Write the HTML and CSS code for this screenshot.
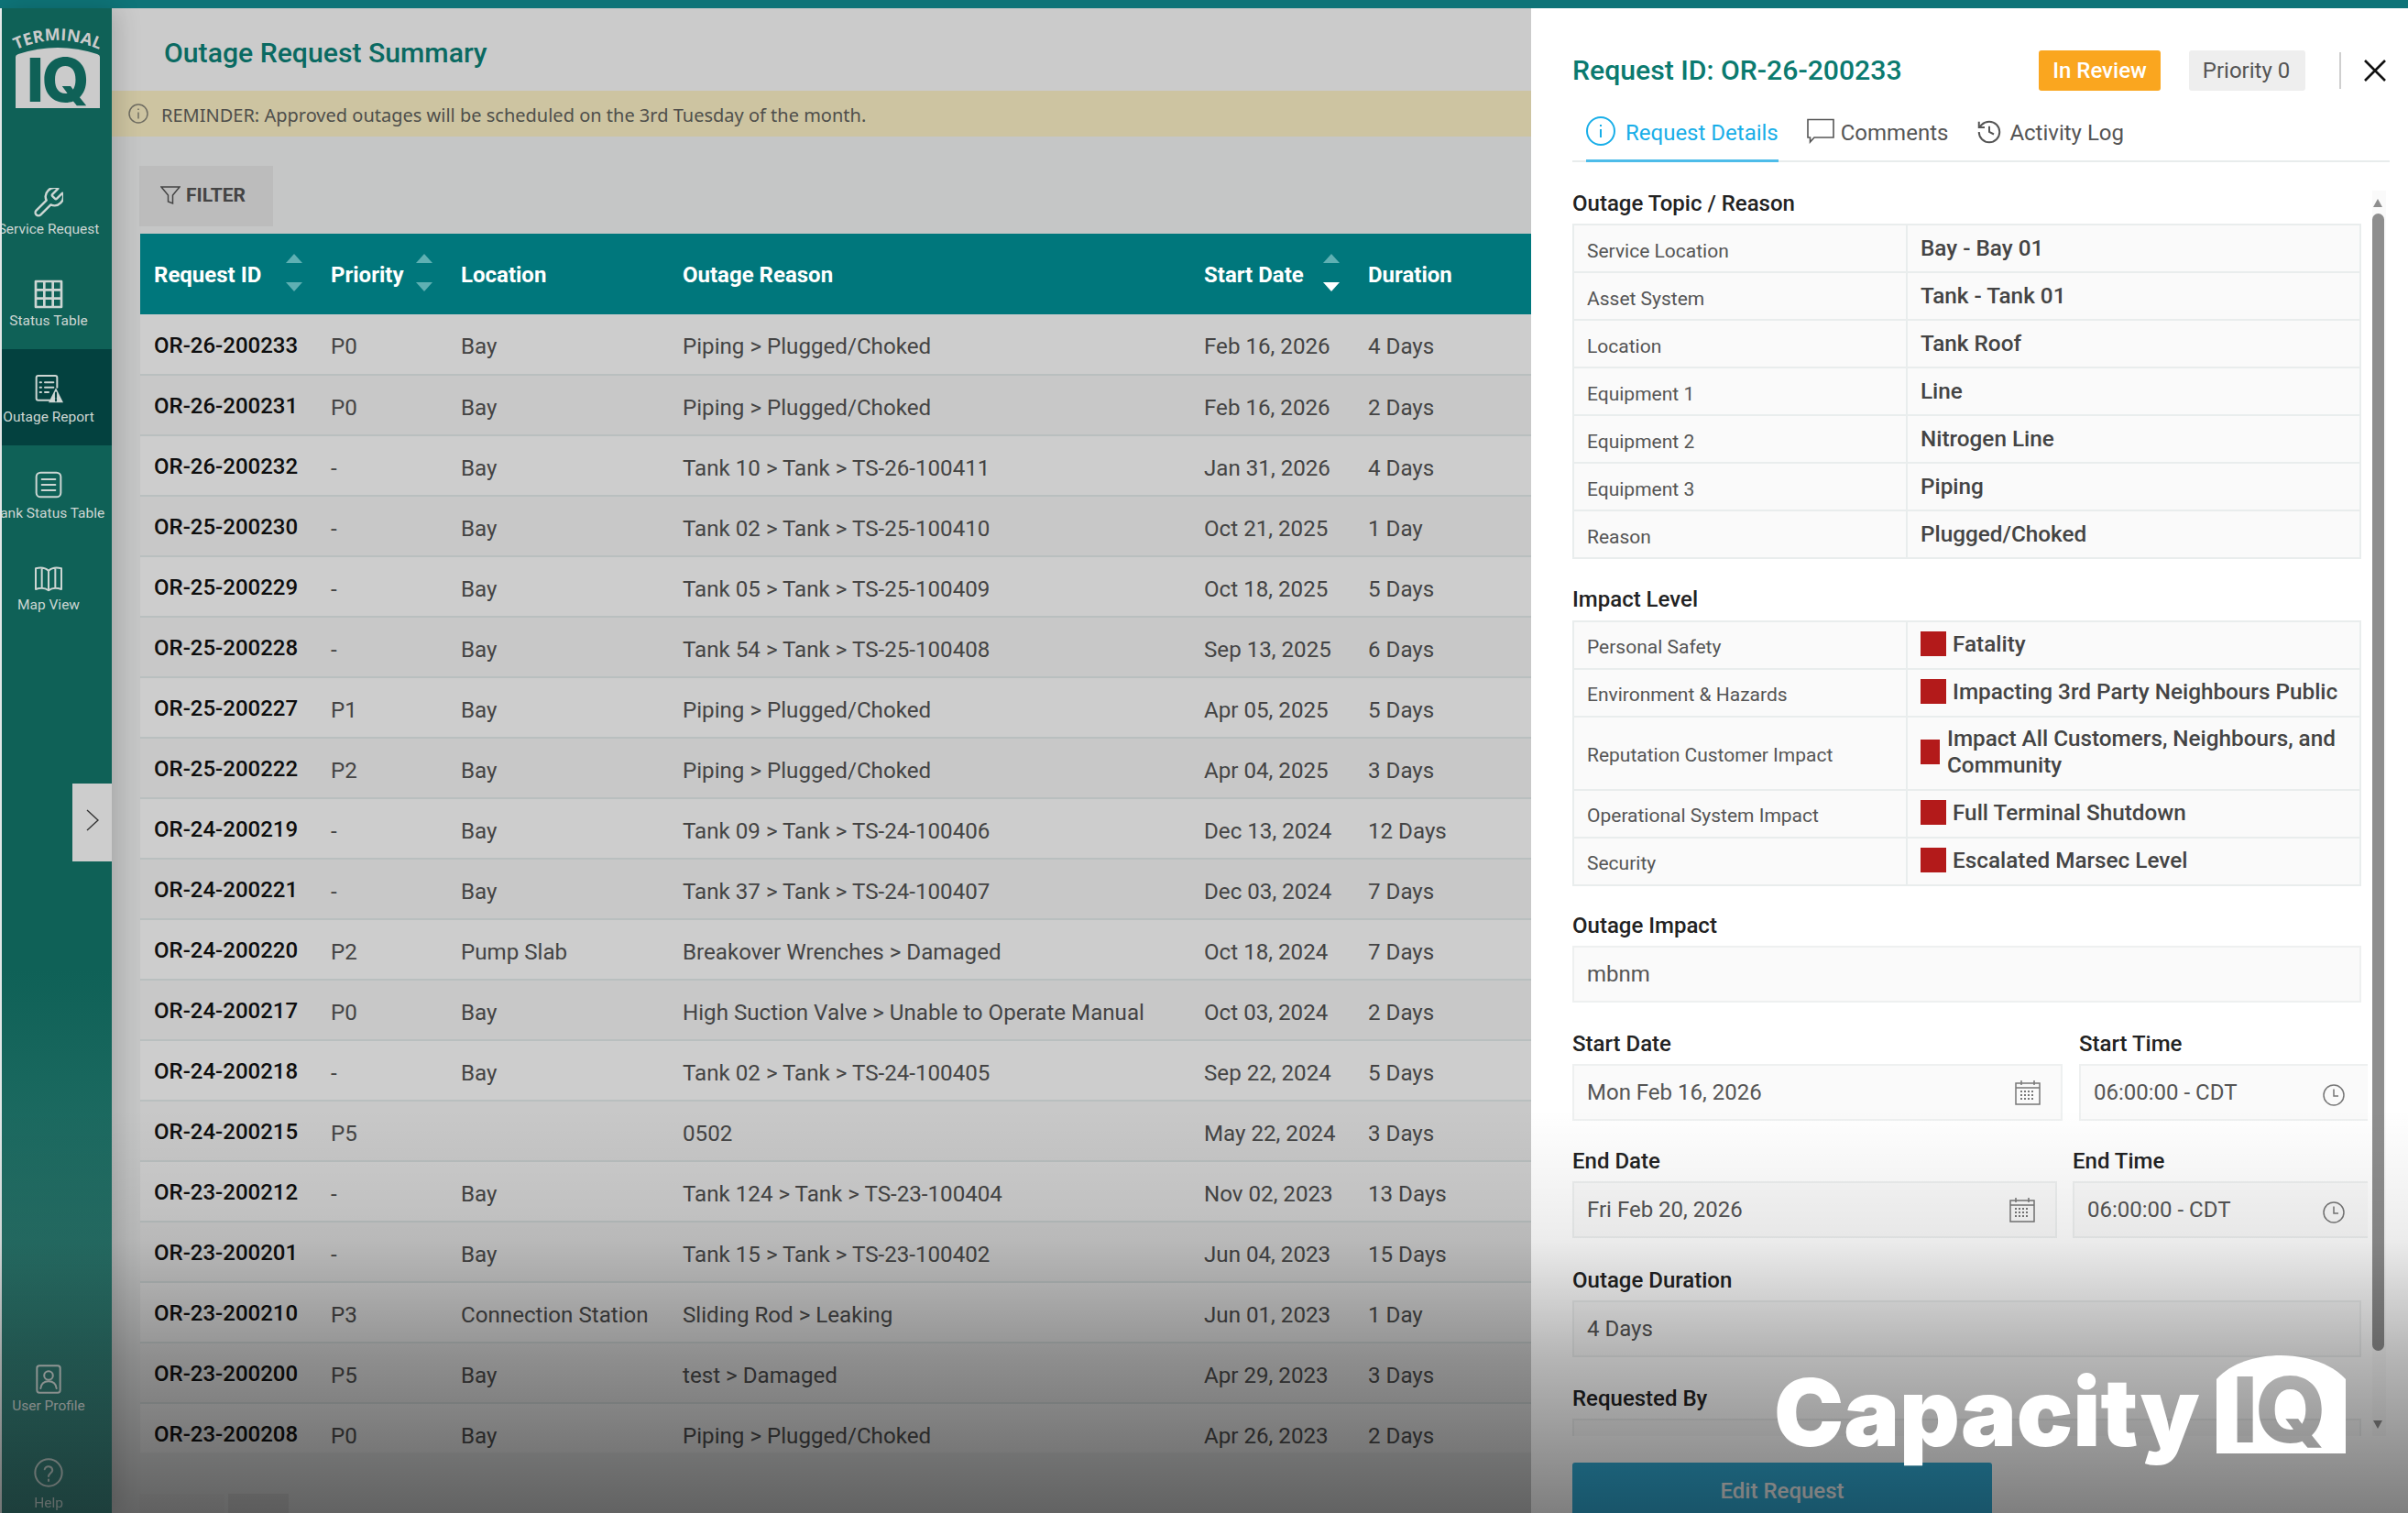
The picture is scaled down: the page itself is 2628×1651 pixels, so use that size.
FILE: index.html
```html
<!DOCTYPE html>
<html lang="en">
  <head>
    <meta charset="UTF-8" />
    <title>Outage Request Summary</title>
    <link rel="stylesheet" href="styles.css">
  </head>
  <body>
    <div class="top-bar"></div>
    <div class="app">
      <!-- Side navigation -->
      <nav class="sidebar">
        <div class="logo">
          <svg width="92" height="85" viewBox="0 0 92 85">
            <path id="logoArc" d="M1 21 Q46 1 91 21" fill="none" />
            <text class="logo-arc-text"><textPath href="#logoArc" startOffset="50%" text-anchor="middle">TERMINAL</textPath></text>
            <path class="logo-shape" d="M0 85 V29 Q0 27 3 26 Q46 12 89 26 Q92 27 92 29 V85 Z" />
            <text class="logo-iq" x="12" y="78">IQ</text>
          </svg>
        </div>
        <a class="nav-item nav-service">
          <svg class="nav-icon" viewBox="2 2 20 20"><path d="M14.7 6.3a1 1 0 0 0 0 1.4l1.6 1.6a1 1 0 0 0 1.4 0l3.77-3.77a6 6 0 0 1-7.94 7.94l-6.91 6.91a2.12 2.12 0 0 1-3-3l6.91-6.91a6 6 0 0 1 7.94-7.94l-3.76 3.76z" /></svg>
          <span>Service Request</span>
        </a>
        <a class="nav-item nav-status">
          <svg class="nav-icon" viewBox="0 0 24 24"><path class="thick" d="M1.5 1.5h21v21h-21z M8.5 1.5v21 M15.5 1.5v21 M1.5 8.5h21 M1.5 15.5h21" /></svg>
          <span>Status Table</span>
        </a>
        <a class="nav-item active">
          <svg class="nav-icon" viewBox="0 0 24 24">
            <path d="M19 11V3a1.5 1.5 0 0 0-1.5-1.5h-14A1.5 1.5 0 0 0 2 3v17a1.5 1.5 0 0 0 1.5 1.5H13" />
            <path d="M5 7h1 M9 7h7 M5 11h1 M9 11h7 M5 15h1 M9 15h3" />
            <path class="solid" d="M18 11.5 L24 23.5 H12 Z" />
            <path class="warn" d="M18 15.5v4 M18 20.8v1.2" />
          </svg>
          <span>Outage Report</span>
        </a>
        <a class="nav-item">
          <svg class="nav-icon" viewBox="0 0 24 24"><rect x="2" y="2" width="20" height="20" rx="3.5" /><path d="M6.5 7.5h11 M6.5 12h11 M6.5 16.5h11" /></svg>
          <span>Tank Status Table</span>
        </a>
        <a class="nav-item nav-map">
          <svg class="nav-icon" viewBox="0 0 24 24"><path d="M12 6 C9.5 3.5 5.5 3 1.5 4 V21 C5.5 19.5 9.5 20 12 22 C14.5 20 18.5 19.5 22.5 21 V4 C18.5 3 14.5 3.5 12 6 Z M12 6 V22 M6.5 3.5 V20 M17.5 3.5 V20" /></svg>
          <span>Map View</span>
        </a>
        <a class="nav-item nav-user">
          <svg class="nav-icon" viewBox="0 0 24 24"><rect x="2.5" y="1" width="19" height="22" rx="2" /><circle cx="12" cy="9" r="3.6" /><path d="M5.5 19.5c.5-4 3-5.8 6.5-5.8s6 1.8 6.5 5.8" /></svg>
          <span>User Profile</span>
        </a>
        <a class="nav-item nav-help">
          <svg class="nav-icon" viewBox="0 0 24 24"><circle cx="12" cy="12" r="11" /><path d="M8.8 9.2a3.3 3.3 0 0 1 6.4.8c0 2.2-3.2 2.6-3.2 5 M12 17.6v1.2" /></svg>
          <span>Help</span>
        </a>
        <div class="sidebar-toggle">
          <svg width="14" height="24" viewBox="0 0 14 24"><path d="M1 1 L13 12 L1 23" /></svg>
        </div>
      </nav>

      <!-- Summary table -->
      <main class="main">
        <div class="page-title">Outage Request Summary</div>
        <div class="reminder">
          <svg width="22" height="22" viewBox="0 0 22 22"><circle cx="11" cy="11" r="10" /><path d="M11 9.5v7 M11 5.5v1.5" /></svg>
          <span>REMINDER: Approved outages will be scheduled on the 3rd Tuesday of the month.</span>
        </div>
        <button class="filter-btn" type="button">
          <svg width="22" height="22" viewBox="0 0 22 22"><path d="M1 2 H21 L13.5 11 V20 L8.5 18 V11 Z" /></svg>
          FILTER
        </button>
        <div class="table-wrap">
          <table class="summary">
            <colgroup>
              <col class="col-id" /><col class="col-priority" /><col class="col-location" />
              <col class="col-reason" /><col class="col-date" /><col class="col-duration" />
            </colgroup>
            <thead>
              <tr>
                <th><span class="sortable">Request ID<i class="arrows arrows-id"><b></b><b></b></i></span></th>
                <th><span class="sortable">Priority<i class="arrows arrows-priority"><b></b><b></b></i></span></th>
                <th>Location</th>
                <th>Outage Reason</th>
                <th><span class="sortable">Start Date<i class="arrows arrows-date sorted"><b></b><b></b></i></span></th>
                <th>Duration</th>
              </tr>
            </thead>
            <tbody>
              <tr><td>OR-26-200233</td><td>P0</td><td>Bay</td><td>Piping &gt; Plugged/Choked</td><td>Feb 16, 2026</td><td>4 Days</td></tr>
              <tr><td>OR-26-200231</td><td>P0</td><td>Bay</td><td>Piping &gt; Plugged/Choked</td><td>Feb 16, 2026</td><td>2 Days</td></tr>
              <tr><td>OR-26-200232</td><td>-</td><td>Bay</td><td>Tank 10 &gt; Tank &gt; TS-26-100411</td><td>Jan 31, 2026</td><td>4 Days</td></tr>
              <tr><td>OR-25-200230</td><td>-</td><td>Bay</td><td>Tank 02 &gt; Tank &gt; TS-25-100410</td><td>Oct 21, 2025</td><td>1 Day</td></tr>
              <tr><td>OR-25-200229</td><td>-</td><td>Bay</td><td>Tank 05 &gt; Tank &gt; TS-25-100409</td><td>Oct 18, 2025</td><td>5 Days</td></tr>
              <tr><td>OR-25-200228</td><td>-</td><td>Bay</td><td>Tank 54 &gt; Tank &gt; TS-25-100408</td><td>Sep 13, 2025</td><td>6 Days</td></tr>
              <tr><td>OR-25-200227</td><td>P1</td><td>Bay</td><td>Piping &gt; Plugged/Choked</td><td>Apr 05, 2025</td><td>5 Days</td></tr>
              <tr><td>OR-25-200222</td><td>P2</td><td>Bay</td><td>Piping &gt; Plugged/Choked</td><td>Apr 04, 2025</td><td>3 Days</td></tr>
              <tr><td>OR-24-200219</td><td>-</td><td>Bay</td><td>Tank 09 &gt; Tank &gt; TS-24-100406</td><td>Dec 13, 2024</td><td>12 Days</td></tr>
              <tr><td>OR-24-200221</td><td>-</td><td>Bay</td><td>Tank 37 &gt; Tank &gt; TS-24-100407</td><td>Dec 03, 2024</td><td>7 Days</td></tr>
              <tr><td>OR-24-200220</td><td>P2</td><td>Pump Slab</td><td>Breakover Wrenches &gt; Damaged</td><td>Oct 18, 2024</td><td>7 Days</td></tr>
              <tr><td>OR-24-200217</td><td>P0</td><td>Bay</td><td>High Suction Valve &gt; Unable to Operate Manual</td><td>Oct 03, 2024</td><td>2 Days</td></tr>
              <tr><td>OR-24-200218</td><td>-</td><td>Bay</td><td>Tank 02 &gt; Tank &gt; TS-24-100405</td><td>Sep 22, 2024</td><td>5 Days</td></tr>
              <tr><td>OR-24-200215</td><td>P5</td><td></td><td>0502</td><td>May 22, 2024</td><td>3 Days</td></tr>
              <tr><td>OR-23-200212</td><td>-</td><td>Bay</td><td>Tank 124 &gt; Tank &gt; TS-23-100404</td><td>Nov 02, 2023</td><td>13 Days</td></tr>
              <tr><td>OR-23-200201</td><td>-</td><td>Bay</td><td>Tank 15 &gt; Tank &gt; TS-23-100402</td><td>Jun 04, 2023</td><td>15 Days</td></tr>
              <tr><td>OR-23-200210</td><td>P3</td><td>Connection Station</td><td>Sliding Rod &gt; Leaking</td><td>Jun 01, 2023</td><td>1 Day</td></tr>
              <tr><td>OR-23-200200</td><td>P5</td><td>Bay</td><td>test &gt; Damaged</td><td>Apr 29, 2023</td><td>3 Days</td></tr>
              <tr><td>OR-23-200208</td><td>P0</td><td>Bay</td><td>Piping &gt; Plugged/Choked</td><td>Apr 26, 2023</td><td>2 Days</td></tr>
            </tbody>
          </table>
        </div>
        <div class="pager"><span></span><span class="pager-current"></span></div>
      </main>

      <!-- Request details panel -->
      <aside class="panel">
        <div class="panel-head">
          <h2>Request ID: OR-26-200233</h2>
          <span class="badge badge-review">In Review</span>
          <span class="badge badge-priority">Priority 0</span>
          <span class="head-divider"></span>
          <svg class="close-icon" width="24" height="24" viewBox="0 0 24 24"><path d="M1 1 L23 23 M23 1 L1 23" /></svg>
        </div>

        <div class="tabs">
          <a class="tab tab-active">
            <svg width="32" height="32" viewBox="0 0 32 32"><circle cx="16" cy="16" r="15" /><path d="M16 14v9 M16 9v2" /></svg>
            Request Details
          </a>
          <a class="tab">
            <svg width="30" height="28" viewBox="0 0 30 28"><path d="M1 1.5 H29 V21 H8 L3.5 26 V21 H1 Z" /></svg>
            Comments
          </a>
          <a class="tab">
            <svg width="30" height="30" viewBox="0 0 24 24"><path d="M3 12a9 9 0 1 0 9-9 9.75 9.75 0 0 0-6.74 2.74L3 8" /><path d="M3 3v5h5" /><path d="M12 7v5l4 2" /></svg>
            Activity Log
          </a>
        </div>

        <div class="panel-body">
          <div class="panel-scroll">
            <div class="section-label">Outage Topic / Reason</div>
            <table class="info-table topic-table">
              <tr><td>Service Location</td><td>Bay - Bay 01</td></tr>
              <tr><td>Asset System</td><td>Tank - Tank 01</td></tr>
              <tr><td>Location</td><td>Tank Roof</td></tr>
              <tr><td>Equipment 1</td><td>Line</td></tr>
              <tr><td>Equipment 2</td><td>Nitrogen Line</td></tr>
              <tr><td>Equipment 3</td><td>Piping</td></tr>
              <tr><td>Reason</td><td>Plugged/Choked</td></tr>
            </table>

            <div class="section-label impact-label">Impact Level</div>
            <table class="info-table impact-table">
              <tr><td>Personal Safety</td><td><div class="impact"><i class="swatch"></i>Fatality</div></td></tr>
              <tr><td>Environment &amp; Hazards</td><td><div class="impact"><i class="swatch"></i>Impacting 3rd Party Neighbours Public</div></td></tr>
              <tr class="tall"><td>Reputation Customer Impact</td><td><div class="impact impact-wrap"><i class="swatch"></i>Impact All Customers, Neighbours, and Community</div></td></tr>
              <tr><td>Operational System Impact</td><td><div class="impact"><i class="swatch"></i>Full Terminal Shutdown</div></td></tr>
              <tr><td>Security</td><td><div class="impact"><i class="swatch"></i>Escalated Marsec Level</div></td></tr>
            </table>

            <div class="section-label">Outage Impact</div>
            <div class="field">mbnm</div>

            <div class="field-row">
              <div class="field-col start-date">
                <div class="section-label">Start Date</div>
                <div class="field">Mon Feb 16, 2026
                  <svg class="cal" width="28" height="28" viewBox="0 0 28 28"><path d="M1 4 H27 V27 H1 Z M1 9 H27 M7 1 V6 M21 1 V6" /><path class="dots" d="M6 13h16 M6 17h16 M6 21h16" /></svg>
                </div>
              </div>
              <div class="field-col start-time">
                <div class="section-label">Start Time</div>
                <div class="field">06:00:00 - CDT
                  <svg class="clock" width="24" height="24" viewBox="0 0 24 24"><circle cx="12" cy="12" r="11" /><path d="M12 5.5V13 H17" /></svg>
                </div>
              </div>
            </div>

            <div class="field-row end-row">
              <div class="field-col end-date">
                <div class="section-label">End Date</div>
                <div class="field">Fri Feb 20, 2026
                  <svg class="cal" width="28" height="28" viewBox="0 0 28 28"><path d="M1 4 H27 V27 H1 Z M1 9 H27 M7 1 V6 M21 1 V6" /><path class="dots" d="M6 13h16 M6 17h16 M6 21h16" /></svg>
                </div>
              </div>
              <div class="field-col end-time">
                <div class="section-label">End Time</div>
                <div class="field">06:00:00 - CDT
                  <svg class="clock" width="24" height="24" viewBox="0 0 24 24"><circle cx="12" cy="12" r="11" /><path d="M12 5.5V13 H17" /></svg>
                </div>
              </div>
            </div>

            <div class="section-label">Outage Duration</div>
            <div class="field">4 Days</div>

            <div class="section-label">Requested By</div>
            <div class="field"></div>
          </div>
          <div class="scrollbar">
            <i class="scroll-up"></i>
            <div class="scroll-thumb"></div>
            <i class="scroll-down"></i>
          </div>
        </div>

        <button class="edit-btn" type="button">Edit Request</button>
      </aside>
    </div>

    <!-- Video style fade and brand mark, over the page -->
    <div class="fade"></div>
    <div class="brand">
      <span class="brand-name">Capacity</span>
      <svg class="brand-badge" width="141" height="107" viewBox="0 0 141 107">
        <mask id="iqCut">
          <rect width="141" height="107" fill="white" />
          <text class="brand-iq" x="17" y="95">IQ</text>
        </mask>
        <path mask="url(#iqCut)" d="M0 107 V26 C16 8 44 0 70 0 S125 8 141 26 V107 Z" fill="#fff" />
      </svg>
    </div>
  </body>
</html>
```

FILE: styles.css
```css
* {
  box-sizing: border-box;
}
html, body {
  margin: 0;
  padding: 0;
  height: 100%;
}
body {
  width: 2628px;
  height: 1651px;
  overflow: hidden;
  position: relative;
  font-family: Roboto, Arial, sans-serif;
  background-color: #eef3f3;
  padding-left: 2px;
}
.top-bar {
  height: 9px;
  margin-left: -2px;
  background-color: #0e7478;
}
.app {
  display: flex;
  height: 1642px;
}

/* Sidebar */
.sidebar {
  width: 120px;
  flex-shrink: 0;
  position: relative;
  z-index: 2;
  overflow: hidden;
  display: flex;
  flex-direction: column;
  background: linear-gradient(to bottom, #0f6157 0, #0f6157 1050px, #2a736a 1400px, #3a7e78 100%);
  box-shadow: 6px 0 26px rgba(0, 0, 0, 0.16);
}
.logo {
  height: 169px;
  padding: 24px 0 0 15px;
}
.logo svg {
  display: block;
  overflow: visible;
}
.logo-arc-text {
  font-family: "Open Sans", sans-serif;
  font-size: 18px;
  font-weight: 700;
  letter-spacing: 0.2px;
  fill: #cbcbcb;
}
.logo-shape {
  fill: #cbcbcb;
}
.logo-iq {
  font-family: Inter, sans-serif;
  font-size: 66px;
  font-weight: 800;
  letter-spacing: -2px;
  fill: #0f6157;
}
.nav-item {
  width: 120px;
  height: 105px;
  padding: 27px 18px 0 0;
  display: flex;
  flex-direction: column;
  align-items: center;
  flex-shrink: 0;
  color: #cdd6d3;
  font-size: 15.5px;
  white-space: nowrap;
}
.nav-item span {
  margin-top: 6px;
  line-height: 18px;
}
.nav-icon {
  display: block;
  width: 32px;
  height: 32px;
  flex-shrink: 0;
  fill: none;
  stroke: #cdd6d3;
  stroke-width: 1.5;
  stroke-linecap: round;
  stroke-linejoin: round;
}
.nav-icon .thick {
  stroke-width: 2;
  stroke-linecap: butt;
}
.nav-icon .solid {
  fill: #cdd6d3;
  stroke: none;
}
.nav-icon .warn {
  stroke: #03413f;
  stroke-width: 1.6;
}
.nav-service {
  height: 99px;
}
.nav-service span,
.nav-status span,
.nav-map span,
.nav-user span {
  margin-top: 4px;
}
.nav-status {
  height: 104px;
}
.nav-status .nav-icon {
  margin-top: 1px;
}
.nav-map {
  padding-top: 24px;
}
.nav-item.active {
  background-color: #03413f;
}
.nav-user {
  margin-top: auto;
  height: 102px;
}
.nav-help {
  height: 87px;
  opacity: 0.9;
}
.nav-help span {
  margin-top: 8px;
}
.sidebar-toggle {
  position: absolute;
  top: 846px;
  right: 0;
  width: 43px;
  height: 85px;
  padding-bottom: 6px;
  background-color: #cdcdcd;
  display: flex;
  align-items: center;
  justify-content: center;
}
.sidebar-toggle path {
  fill: none;
  stroke: #333;
  stroke-width: 1.4;
}

/* Main column */
.main {
  flex: 1;
  min-width: 0;
  background-color: #c5c6c6;
  display: flex;
  flex-direction: column;
  overflow: hidden;
}
.page-title {
  height: 90px;
  flex-shrink: 0;
  padding: 31px 0 0 57px;
  background-color: #cbcbcb;
  color: #0a6a62;
  font-size: 30.2px;
  font-weight: 500;
  line-height: 36px;
}
.reminder {
  height: 50px;
  flex-shrink: 0;
  padding-left: 18px;
  display: flex;
  align-items: center;
  gap: 14px;
  background-color: #cdc4a1;
  color: #4f4f4b;
  font-family: "Noto Sans", sans-serif;
  font-size: 20px;
}
.reminder span {
  padding-top: 2px;
}
.reminder svg {
  fill: none;
  stroke: #6f6d62;
  stroke-width: 1.5;
}
.filter-btn {
  width: 146px;
  height: 66px;
  flex-shrink: 0;
  margin: 32px 0 8px 30px;
  padding: 0 7px 2px 0;
  border: none;
  background-color: #bcbcbc;
  color: #444;
  font-family: Roboto, sans-serif;
  font-size: 21px;
  font-weight: 700;
  display: flex;
  align-items: center;
  justify-content: center;
  gap: 6px;
}
.filter-btn svg {
  fill: none;
  stroke: #444;
  stroke-width: 1.5;
}
.table-wrap {
  height: 1330px;
  flex-shrink: 0;
  margin-left: 31px;
  overflow: hidden;
}
.summary {
  width: 1518px;
  table-layout: fixed;
  border-collapse: collapse;
  font-size: 24.15px;
}
.col-id { width: 194px; }
.col-priority { width: 142px; }
.col-location { width: 242px; }
.col-reason { width: 569px; }
.col-date { width: 179px; }
.col-duration { width: 192px; }
.summary th {
  height: 88px;
  padding: 2px 0 0 14px;
  background-color: #00777c;
  color: #fff;
  font-size: 24px;
  font-weight: 700;
  text-align: left;
  white-space: nowrap;
}
.summary th:first-child {
  padding-left: 15px;
}
.sortable {
  display: block;
  position: relative;
}
.arrows {
  position: absolute;
  top: -9px;
  width: 19px;
  height: 41px;
}
.arrows-id { left: 144px; }
.arrows-priority { left: 93px; }
.arrows-date { left: 130px; }
.arrows b {
  position: absolute;
  left: 0;
  width: 0;
  height: 0;
  border-left: 9.5px solid transparent;
  border-right: 9.5px solid transparent;
}
.arrows b:first-child {
  top: 0;
  border-bottom: 10px solid #5fb0b3;
}
.arrows b:last-child {
  bottom: 0;
  border-top: 10px solid #5fb0b3;
}
.arrows.sorted b:last-child {
  border-top-color: #fff;
}
.summary td {
  height: 66px;
  padding: 5px 0 0 14px;
  color: #444;
  border-bottom: 2px solid #b9bfbf;
  white-space: nowrap;
  overflow: hidden;
}
.summary td:first-child {
  color: #0e0e0e;
  font-size: 24px;
  font-weight: 500;
  padding: 2px 0 0 15px;
}
.summary tbody tr:nth-child(odd) td {
  background-color: #cdcdcd;
}
.summary tbody tr:nth-child(even) td {
  background-color: #c8c8c8;
}
.pager {
  display: flex;
  gap: 4px;
  margin: 45px 0 0 30px;
}
.pager span {
  width: 93px;
  height: 30px;
  background-color: #c2c2c2;
}
.pager .pager-current {
  width: 66px;
  background-color: #b9b9b9;
}

/* Details panel */
.panel {
  width: 957px;
  flex-shrink: 0;
  background-color: #fff;
  padding: 46px 24px 0 45px;
  display: flex;
  flex-direction: column;
  overflow: hidden;
  position: relative;
}
.panel-head {
  height: 44px;
  display: flex;
  align-items: center;
  flex-shrink: 0;
}
.panel-head h2 {
  margin: 0;
  width: 509px;
  padding-bottom: 2px;
  color: #0b7a6f;
  font-size: 30.2px;
  font-weight: 500;
}
.badge {
  height: 44px;
  display: flex;
  align-items: center;
  justify-content: center;
  border-radius: 3px;
  font-size: 24px;
}
.badge-review {
  width: 133px;
  background-color: #faa61f;
  color: #fff;
  font-weight: 500;
}
.badge-priority {
  width: 127px;
  margin-left: 31px;
  padding-right: 2px;
  background-color: #eeeeee;
  color: #555;
}
.head-divider {
  width: 2px;
  height: 40px;
  margin-left: 37px;
  background-color: #cfcfcf;
}
.close-icon {
  margin-left: 25px;
}
.close-icon path {
  fill: none;
  stroke: #111;
  stroke-width: 2.6;
}
.tabs {
  height: 57px;
  margin: 21px -4px 0 0;
  padding-left: 15px;
  flex-shrink: 0;
  display: flex;
  gap: 30px;
  border-bottom: 2px solid #e8ecec;
}
.tab {
  height: 57px;
  display: flex;
  align-items: flex-start;
  gap: 7px;
  padding-top: 9px;
  line-height: 32px;
  font-size: 24px;
  color: #555;
}
.tab svg {
  fill: none;
  stroke: #555;
  stroke-width: 1.6;
  flex-shrink: 0;
}
.tab-active {
  color: #18aee8;
  gap: 11px;
  margin-right: 1px;
  padding-top: 7px;
  line-height: 36px;
  border-bottom: 3px solid #4dbce9;
}
.tab-active svg {
  stroke: #18aee8;
  stroke-width: 2;
}
.panel-body {
  height: 1359px;
  margin-top: 31px;
  flex-shrink: 0;
  display: flex;
  overflow: hidden;
}
.panel-scroll {
  width: 868px;
  flex-shrink: 0;
  overflow: hidden;
}
.section-label {
  height: 28px;
  line-height: 28px;
  margin-bottom: 8px;
  color: #222;
  font-size: 24px;
  font-weight: 500;
  white-space: nowrap;
}
.info-table {
  width: 861px;
  table-layout: fixed;
  border-collapse: collapse;
  background-color: #fafafa;
}
.info-table td {
  height: 52px;
  padding: 0 0 0 14px;
  border: 2px solid #e9eded;
  color: #444;
  font-size: 24.3px;
  font-weight: 500;
}
.info-table td:first-child {
  width: 364px;
  color: #555;
  font-size: 21px;
  font-weight: 400;
  padding-top: 6px;
}
.topic-table {
  margin-bottom: 30px;
}
.topic-table td {
  padding-bottom: 1px;
}
.impact-label {
  margin-bottom: 9px;
}
.impact-table {
  margin-bottom: 29px;
}
.impact-table td:first-child {
  padding-top: 3px;
}
.impact-table .tall td {
  height: 80px;
}
.impact {
  display: flex;
  align-items: center;
  gap: 7px;
  line-height: 29px;
  margin-top: -4px;
}
.swatch {
  width: 28px;
  height: 27px;
  flex-shrink: 0;
  background-color: #b31a1a;
}
.impact-wrap {
  gap: 8px;
}
.impact-wrap .swatch {
  width: 21px;
}
.field {
  height: 62px;
  position: relative;
  padding-left: 14px;
  display: flex;
  align-items: center;
  width: 861px;
  margin-bottom: 31px;
  border: 2px solid #eef0f0;
  background-color: #fafafa;
  color: #555;
  font-size: 24px;
}
.field-row {
  display: flex;
}
.field-col {
  flex-shrink: 0;
}
.field-col .field {
  width: 100%;
  justify-content: flex-start;
  margin-bottom: 30px;
}
.end-row .field-col .field {
  margin-bottom: 32px;
}
.start-date { width: 535px; margin-right: 18px; }
.start-time { width: 325px; }
.end-date { width: 529px; margin-right: 17px; }
.end-time { width: 332px; }
.cal, .clock {
  margin-left: auto;
  fill: none;
  stroke: #777;
  stroke-width: 1.5;
  flex-shrink: 0;
}
.cal {
  margin-right: 22px;
}
.cal .dots {
  stroke-width: 2;
  stroke-dasharray: 2 2;
}
.clock {
  margin-top: 6px;
  margin-right: 33px;
}
.scrollbar {
  width: 20px;
  margin-left: 5px;
  position: relative;
  background-color: #fafafa;
}
.scroll-thumb {
  position: absolute;
  top: 25px;
  left: 0;
  width: 13px;
  height: 1241px;
  border-radius: 7px;
  background-color: #8e8e8e;
}
.scroll-up, .scroll-down {
  position: absolute;
  left: 1px;
  width: 0;
  height: 0;
  border-left: 5.5px solid transparent;
  border-right: 5.5px solid transparent;
}
.scroll-up {
  top: 9px;
  border-bottom: 9px solid #8e8e8e;
}
.scroll-down {
  top: 1342px;
  border-top: 9px solid #8e8e8e;
}
.edit-btn {
  width: 458px;
  height: 60px;
  margin-top: 29px;
  flex-shrink: 0;
  padding: 2px 0 0;
  border: none;
  border-radius: 3px;
  background-color: #31aad4;
  color: #f2f2f2;
  font-family: Roboto, sans-serif;
  font-size: 24px;
  font-weight: 500;
}

/* Overlays */
.fade {
  position: absolute;
  inset: 0;
  z-index: 5;
  pointer-events: none;
  background: linear-gradient(to bottom, rgba(0, 0, 0, 0) 1210px, rgba(0, 0, 0, 0.075) 1352px, rgba(0, 0, 0, 0.29) 1481px, rgba(0, 0, 0, 0.5) 1651px);
}
.brand {
  position: absolute;
  z-index: 6;
  left: 1936px;
  top: 1479px;
  height: 122px;
  display: flex;
  align-items: flex-start;
  gap: 18px;
}
.brand-name {
  font-family: Inter, sans-serif;
  font-size: 102px;
  font-weight: 900;
  letter-spacing: 0;
  line-height: 122px;
  color: #fff;
  margin-top: 1px;
}
.brand-iq {
  font-family: Inter, sans-serif;
  font-size: 99px;
  font-weight: 800;
  letter-spacing: -3px;
  fill: #000;
}
```
